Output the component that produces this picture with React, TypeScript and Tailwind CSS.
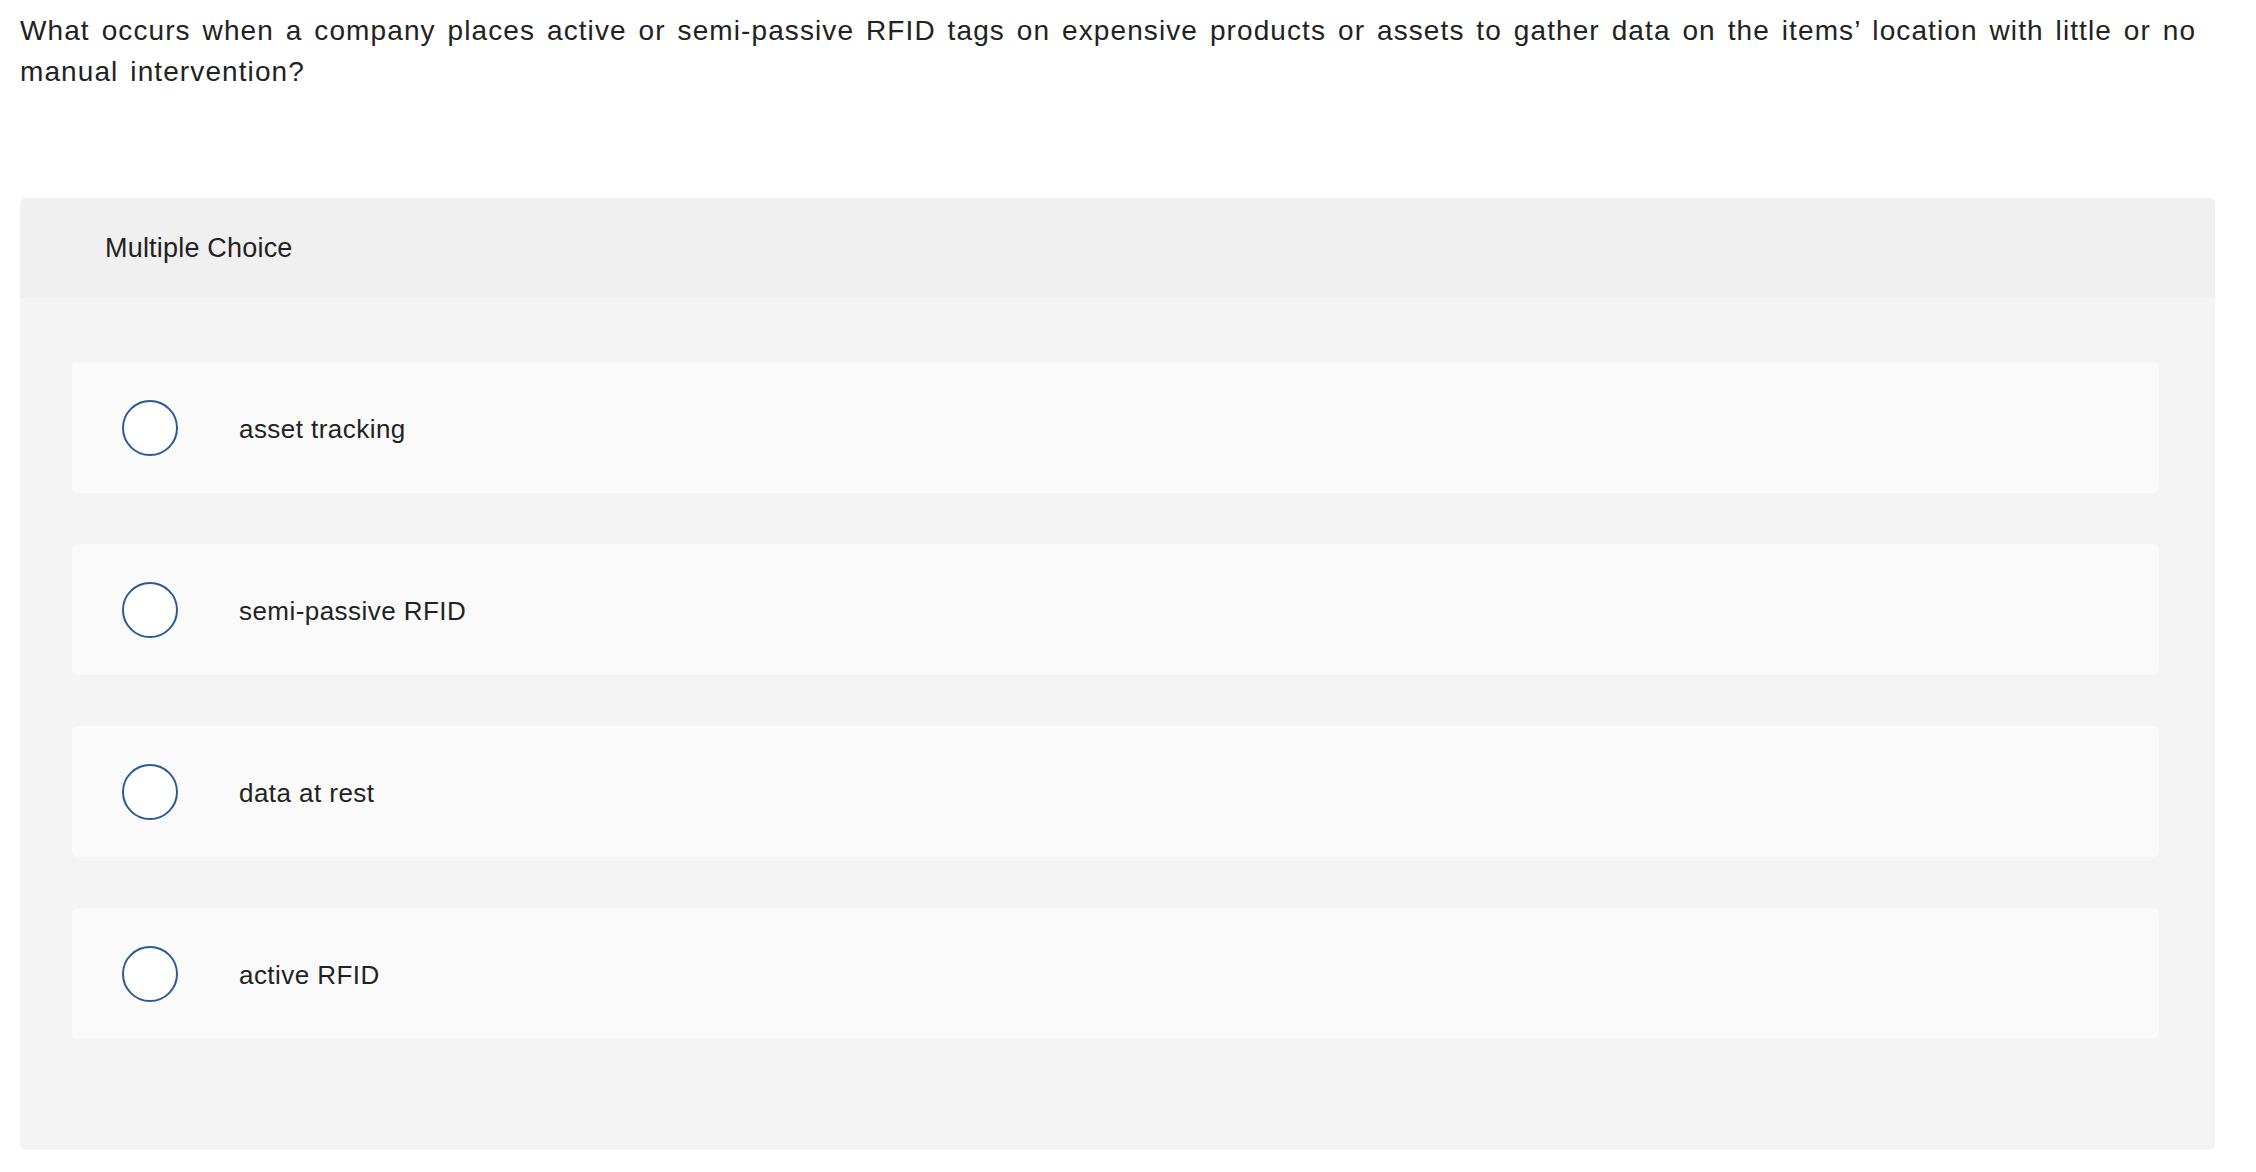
const options = ["asset tracking", "semi-passive RFID", "data at rest", "active RFID"];

export default function App() {
  return (
    <div className="min-h-screen bg-white px-[20px] pt-[10px] font-['Liberation_Sans',Arial,sans-serif] text-[#222222]">
      <p className="text-[28px] leading-[41px] tracking-[1.1px] [word-spacing:3px]">
        What occurs when a company places active or semi-passive RFID tags on expensive products or assets to gather data on the items’ location with little or no manual intervention?
      </p>
      <div className="mt-[106px] w-[2195px] overflow-hidden rounded-[6px] bg-[#f4f4f4]">
        <div className="flex h-[100px] items-center bg-[#f0f0f0] pl-[85px] text-[27px] tracking-[0.2px]">Multiple Choice</div>
        <div className="flex flex-col gap-[51px] pb-[111px] pl-[52px] pr-[56px] pt-[64px]">
          {options.map((opt) => (
            <label
              key={opt}
              className="flex h-[131px] items-center rounded-[6px] bg-[#fafafa] pl-[50px]"
            >
              <span className="h-[56px] w-[56px] shrink-0 rounded-full border-2 border-[#2c5a94] bg-white" />
              <span className="ml-[61px] pt-[3px] text-[26px] tracking-[0.45px]">{opt}</span>
            </label>
          ))}
        </div>
      </div>
    </div>
  );
}
